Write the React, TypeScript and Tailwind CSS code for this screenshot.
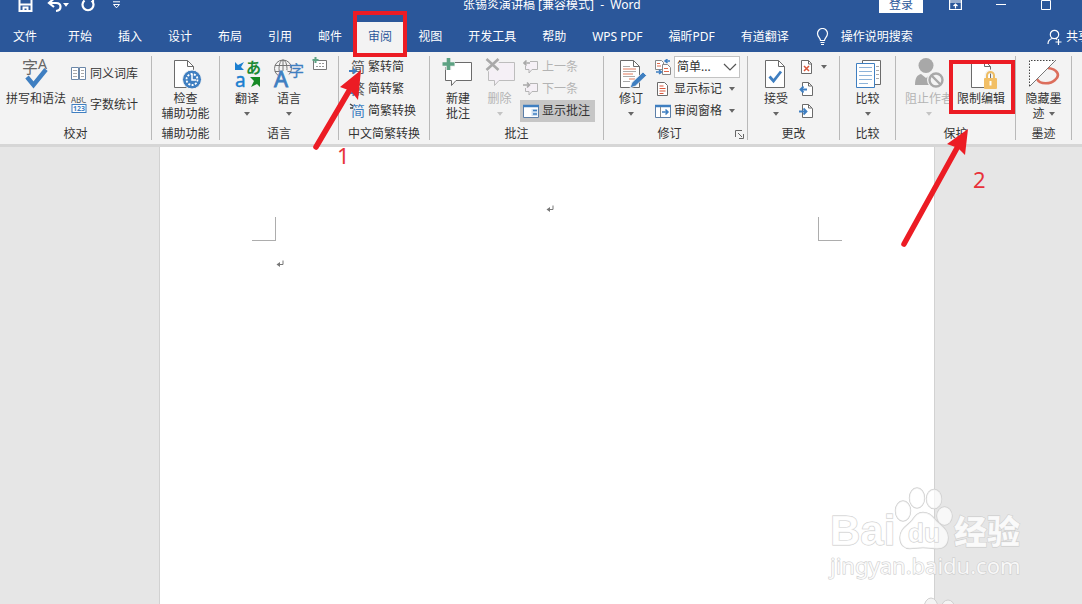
import type { ReactNode } from "react";

const BLUE = "#3f7fc1";
const GREY = "#6b6b6b";

function Svg({ w, h, children, vb }: { w: number; h: number; children: ReactNode; vb?: string }) {
  return (
    <svg width={w} height={h} viewBox={vb ?? `0 0 ${w} ${h}`} fill="none" className="shrink-0" aria-hidden="true">
      {children}
    </svg>
  );
}

function Caret({ dim = false, light = false }: { dim?: boolean; light?: boolean }) {
  return (
    <Svg w={6} h={4}>
      <path d="M0 0h6L3 3.800z" fill={light ? "#fff" : dim ? "#c4c4c4" : "#666"} />
    </Svg>
  );
}

/* ---------- large icons, 32px high ---------- */

const SpellIcon = () => (
  <Svg w={32} h={32}>
    <text x="2" y="15" fontSize="16" fill="#666" fontFamily="Noto Sans CJK SC">字</text>
    <text x="18" y="11" fontSize="14" fill="#666" fontFamily="Noto Sans">A</text>
    <path d="M7 19l6.500 8L26 11.500" stroke={BLUE} strokeWidth="4.400" />
  </Svg>
);

const Sheet = ({ children }: { children?: ReactNode }) => (
  <>
    <path d="M5.500 2.500h13l6 6v21h-19z" fill="#fff" stroke={GREY} />
    <path d="M18.500 2.500v6h6" stroke={GREY} />
    {children}
  </>
);

const AccessIcon = () => (
  <Svg w={32} h={32}>
    <g transform="translate(-1 0)">
      <Sheet />
    </g>
    <circle cx="22" cy="21.500" r="9.500" fill={BLUE} stroke="#f3f3f3" />
    <circle cx="22" cy="21.500" r="5.500" stroke="#fff" strokeWidth="1.800" strokeDasharray="2 1.400" />
    <path d="M22 16v6h4" stroke="#fff" strokeWidth="1.500" />
  </Svg>
);

const TranslateIcon = () => (
  <Svg w={32} h={32}>
    <path d="M4 4l3 3 6-3-3 5 3 3H4z" fill="#1b7fd0" />
    <text x="4" y="29" fontSize="19" fill="#1b7fd0" stroke="#1b7fd0" strokeWidth=".4" fontFamily="Noto Sans">a</text>
    <text x="15" y="15" fontSize="15" fontWeight="700" fill="#1c8a34" fontFamily="Noto Sans CJK JP">あ</text>
    <path d="M19 19h10v10l-3-3-6 3 3-6z" fill="#178a26" />
  </Svg>
);

const LanguageIcon = () => (
  <Svg w={32} h={32}>
    <g stroke="#777">
      <circle cx="10" cy="10.500" r="8.500" />
      <ellipse cx="10" cy="10.500" rx="4" ry="8.500" />
      <path d="M10 2v17M2 7.500h16M2 13.500h16" />
    </g>
    <path d="M1 30h6l10-10-3-8-8 2z" fill="#f3f3f3" />
    <text x="1" y="29" fontSize="22" fill={BLUE} stroke={BLUE} strokeWidth=".8" fontFamily="Noto Sans">A</text>
    <text x="16" y="18" fontSize="15" fill={BLUE} stroke={BLUE} strokeWidth=".3" fontFamily="Noto Sans CJK SC">字</text>
  </Svg>
);

const NewCommentIcon = () => (
  <Svg w={32} h={32}>
    <path d="M3.500 4.500h26v18H14l-4.500 5v-5h-6z" fill="#fff" stroke={GREY} strokeLinejoin="round" />
    <path d="M6.500 0v12M0 6h13" stroke="#f3f3f3" strokeWidth="6" />
    <path d="M6.500 0v12M.5 6h12" stroke="#5da283" strokeWidth="3.600" />
  </Svg>
);

const DeleteIcon = () => (
  <Svg w={32} h={32}>
    <path d="M4.500 4.500h26v18H15l-4.500 5v-5h-6z" fill="#f5f0f6" stroke="#bdbdbd" strokeLinejoin="round" />
    <path d="M2 1l13 11M15 1L2 12" stroke="#f3f3f3" strokeWidth="5" />
    <path d="M2.500 1l12 11M14.500 1l-12 11" stroke="#a9a9a9" strokeWidth="2.600" />
  </Svg>
);

const TrackIcon = () => (
  <Svg w={32} h={32}>
    <Sheet>
      <path d="M8 11h13M8 16h10M14 21h6" stroke="#e27a5c" />
      <path d="M8 8.500h7M8 13.500h13M8 18.500h12M8 23.500h7" stroke="#aaa" />
    </Sheet>
    <path d="M15 30l2-5.500L28 14l3.500 3.500L20.500 28z" fill={BLUE} stroke="#f3f3f3" strokeWidth=".8" />
  </Svg>
);

const AcceptIcon = () => (
  <Svg w={32} h={32}>
    <Sheet />
    <path d="M9.500 18.500l4 4.500L21 13.500" stroke={BLUE} strokeWidth="2.800" />
  </Svg>
);

const CompareIcon = () => (
  <Svg w={32} h={32}>
    <path d="M10.500 2.500h18v24h-18z" fill="#fff" stroke={GREY} />
    <path d="M4.500 5.500h18v24h-18z" fill="#fff" stroke={BLUE} />
    <path d="M7 9.500h13M7 13.500h13M7 17.500h13M7 21.500h13M7 25.500h9" stroke="#8db3d9" />
    <path d="M24 8.500h3M24 12.500h3M24 16.500h3M24 20.500h3" stroke="#aaa" />
  </Svg>
);

const BlockIcon = () => (
  <Svg w={32} h={32}>
    <circle cx="13" cy="7.500" r="7.500" fill="#a8a8a8" />
    <path d="M2 27c0-7 2-10 6-11l5 4 5-4c3 1 5 4 5 11z" fill="#a8a8a8" />
    <circle cx="23" cy="22" r="9" fill="#f3f3f3" />
    <circle cx="23" cy="22" r="6.500" stroke="#a8a8a8" strokeWidth="2.400" />
    <path d="M18.500 17.500l9 9" stroke="#a8a8a8" strokeWidth="2.400" />
  </Svg>
);

const RestrictIcon = () => (
  <Svg w={32} h={32}>
    <g transform="translate(1 0)">
      <Sheet />
    </g>
    <path d="M21.500 21v-3.500a4 4 0 018 0V21" stroke="#f3f3f3" strokeWidth="4" />
    <path d="M22 21v-3.500a3.500 3.500 0 017 0V21" stroke="#eebd63" strokeWidth="2" />
    <rect x="19" y="20" width="13" height="11" rx="1" fill="#f2bf66" />
    <path d="M25.500 23v4.500" stroke="#fff" strokeWidth="2" />
  </Svg>
);

const HideInkIcon = () => (
  <Svg w={32} h={32}>
    <path d="M9 21c3 6 14 5 18 1 6-5 2-11-7-12" stroke="#dc6e5c" strokeWidth="2.600" />
    <path d="M1.500 2.500h26l-26 26z" fill="#fff" />
    <path d="M1.500 28V2.500H28" stroke="#444" strokeDasharray="1.500 1.500" />
    <path d="M28 2L1.500 28.500" stroke="#777" />
  </Svg>
);

/* ---------- small icons, 16px ---------- */

const BookIcon = () => (
  <Svg w={16} h={16}>
    <path d="M.5 1.500h7v12h-7zM8.500 1.500h6v12h-6z" fill="#fff" stroke="#6b87a8" />
    <path d="M2 4.500h4M2 7.500h4M2 10.500h4M10 4.500h3M10 7.500h3M10 10.500h3" stroke="#aaa" />
  </Svg>
);

const CountIcon = () => (
  <Svg w={16} h={16}>
    <text x="0" y="6" fontSize="8" fill="#555" fontFamily="Noto Sans">ABC</text>
    <rect x="1" y="7.500" width="14" height="8" fill="#fff" stroke={BLUE} />
    <text x="2" y="14" fontSize="7" fontWeight="700" fill={BLUE} fontFamily="Noto Sans">123</text>
  </Svg>
);

const ImeIcon = () => (
  <Svg w={16} h={16}>
    <path d="M1.500 4.500h13v9h-13z" fill="#fff" stroke="#777" />
    <path d="M7 7.500h6M4 10.500h8" stroke="#999" strokeDasharray="2 1" />
    <path d="M3.500 1v6M.5 4h6" stroke="#5da283" strokeWidth="2" />
  </Svg>
);

function HanIcon({ char, color, ghost }: { char: string; color: string; ghost?: boolean }) {
  return (
    <Svg w={16} h={16}>
      <text x="2" y="13" fontSize="14" fill={color} fontFamily="Noto Sans CJK SC">{char}</text>
      {ghost ? (
        <path d="M1 1l3 2M1 5h3" stroke="#444" strokeWidth="1.500" />
      ) : (
        <path d="M0 12h6M4 9.500l3 2.500-3 2.500" stroke={BLUE} strokeWidth="1.800" />
      )}
    </Svg>
  );
}

const PrevIcon = ({ next = false }: { next?: boolean }) => (
  <Svg w={16} h={16}>
    <path d="M7 2.500h7.500v8H9l-3 3.500v-3.500H2.500V7" fill="#f5f0f6" stroke="#b5b5b5" />
    {next ? (
      <path d="M0 4h6M4 1.500L6.500 4 4 6.500" stroke="#a9a9a9" strokeWidth="1.600" />
    ) : (
      <path d="M7 4H1M3.500 1.500L1 4l2.500 2.500" stroke="#a9a9a9" strokeWidth="1.600" />
    )}
  </Svg>
);

const ShowCommentsIcon = () => (
  <Svg w={16} h={16}>
    <path d="M.5 2.500h15v12H.5z" fill="#fff" stroke="#5c7fa8" />
    <path d="M0 3h16" stroke={BLUE} strokeWidth="2.500" />
    <path d="M8.500 6h6v7h-6z" fill="#cfe0f1" />
    <path d="M10 7.500h4M10 11h4" stroke={BLUE} strokeWidth="1.500" />
  </Svg>
);

const DisplayIcon = () => (
  <Svg w={16} h={16}>
    <path d="M.5 1.500h6l2 2v7h-8z" fill="#fff" stroke="#888" />
    <path d="M7.500 5.500h5l3 3v7h-8z" fill="#fff" stroke="#888" />
    <path d="M2 4.500h3M2 7h4M9 9.500h4M9 12.500h5" stroke="#e0694a" />
    <path d="M15 2h-4M12.500 0L10 2l2.500 2M1 13h5M4 11l2.500 2L4 15" stroke={BLUE} strokeWidth="1.500" />
  </Svg>
);

const MarkupIcon = () => (
  <Svg w={16} h={16}>
    <path d="M2.500 1.500h7l3 3v10h-10z" fill="#fff" stroke={GREY} />
    <path d="M4.500 5h4M4.500 7.500h6M4.500 10h6M4.500 12.500h4" stroke="#d9573a" />
  </Svg>
);

const PaneIcon = () => (
  <Svg w={16} h={16}>
    <path d="M.5 2.500h15v12H.5z" fill="#fff" stroke="#5c7fa8" />
    <path d="M0 3h16" stroke={BLUE} strokeWidth="2.500" />
    <path d="M5.500 4v10" stroke="#888" />
    <path d="M7 9h6M10.500 6.500L13 9l-2.500 2.500" stroke={BLUE} strokeWidth="1.500" />
  </Svg>
);

function ChangeIcon({ kind }: { kind: "reject" | "prev" | "next" }) {
  return (
    <Svg w={16} h={16}>
      <path d={kind === "reject" ? "M2.500 1.500h7l3 3v10h-10z" : "M3.500 1.500h6l4 4v9h-10z"} fill="#fff" stroke={GREY} />
      <path d="M9.500 1.500v3.500h3.500" stroke={GREY} />
      {kind === "reject" && <path d="M5 7l5 5M10 7l-5 5" stroke="#d9573a" strokeWidth="1.500" />}
      {kind === "prev" && <path d="M8 8.500H1.500M4.500 5.500l-3 3 3 3" stroke={BLUE} strokeWidth="1.800" />}
      {kind === "next" && <path d="M0 8.500h7M4.500 5.500l3 3-3 3" stroke={BLUE} strokeWidth="1.800" />}
    </Svg>
  );
}

/* ---------- ribbon building blocks ---------- */

function Group({ label, width, children, launcher = false }: { label: string; width: string; children: ReactNode; launcher?: boolean }) {
  return (
    <section aria-label={label} className={`flex shrink-0 ${width}`}>
      <div className="flex min-w-0 flex-1 flex-col">
        <div className="flex h-[68px]">{children}</div>
        <div className="flex items-center leading-5">
          <span className="flex-1 text-center">{label}</span>
          {launcher && (
            <button aria-label="修订选项" className="mr-[3px]">
              <Svg w={9} h={9}>
                <path d="M.5 7V.5H7M3 3l4 4M8.500 4v4.500H4" stroke="#666" />
              </Svg>
            </button>
          )}
        </div>
      </div>
      <div className="h-[84px] w-px bg-[#b9b9b9]" />
    </section>
  );
}

function Big({ icon, lines, width, caret = false, dim = false, inlineCaret = false }: { icon: ReactNode; lines: string[]; width: string; caret?: boolean; dim?: boolean; inlineCaret?: boolean }) {
  return (
    <button className={`flex shrink-0 flex-col items-center self-start pt-0.5 leading-[15px] whitespace-nowrap ${width} ${dim ? "text-[#b3b3b3]" : ""}`}>
      <span className="h-[33px]">{icon}</span>
      {lines.map((line, i) => (
        <span key={line} className="flex items-center gap-1">
          {line}
          {inlineCaret && i === lines.length - 1 && <Caret />}
        </span>
      ))}
      {caret && (
        <span className="flex h-[15px] items-center">
          <Caret dim={dim} />
        </span>
      )}
    </button>
  );
}

function Small({ icon, text, dim = false, active = false, caret = false, tall = false }: { icon: ReactNode; text: string; dim?: boolean; active?: boolean; caret?: boolean; tall?: boolean }) {
  return (
    <button
      className={`flex shrink-0 items-center gap-[3px] whitespace-nowrap ${tall ? "h-[31px]" : "h-[22px]"} ${active ? "bg-[#c6c6c6]" : ""} ${dim ? "text-[#b3b3b3]" : ""}`}
    >
      {icon}
      <span>{text}</span>
      {caret && (
        <span className="pl-1">
          <Caret />
        </span>
      )}
    </button>
  );
}

function Tab({ children, active = false }: { children: ReactNode; active?: boolean }) {
  return (
    <button className={`h-full shrink-0 px-[13px] whitespace-nowrap ${active ? "bg-[#f3f3f3] text-[#2b579a]" : ""}`}>{children}</button>
  );
}

const ReturnMark = () => (
  <Svg w={8} h={8}>
    <path d="M7 .5v4H1.500" stroke="#777" />
    <path d="M4 2v5L.5 4.500z" fill="#777" />
  </Svg>
);

function TitleBar() {
  return (
    <header className="h-[22px]">
      <div className="flex h-[10px] items-center">
        <div className="flex w-[463px] shrink-0 items-center pl-[18px]">
          <button aria-label="保存">
            <Svg w={15} h={16}>
              <path d="M1.500 1h12v13h-12z" stroke="#fff" strokeWidth="2" />
              <path d="M2 7.500h11M5.500 14v-3.500h4V14" stroke="#fff" strokeWidth="2" />
            </Svg>
          </button>
          <button aria-label="撤消" className="ml-[14px]">
            <Svg w={16} h={16}>
              <path d="M6.500 2L2 6l5 4M2.500 6H9c6 0 6 7.500 0 8" stroke="#fff" strokeWidth="2.200" />
            </Svg>
          </button>
          <Caret light />
          <button aria-label="重复" className="ml-[11px]">
            <Svg w={16} h={16}>
              <path d="M4.500 3.500a5.500 5.500 0 107 0M8 1h5v5" stroke="#fff" strokeWidth="2.200" />
            </Svg>
          </button>
          <button aria-label="自定义快速访问工具栏" className="ml-4">
            <Svg w={9} h={8}>
              <path d="M1 .8h7M1.500 3.500h6l-3 3.300z" stroke="#fff" />
            </Svg>
          </button>
        </div>
        <h1 className="whitespace-pre">张锡炎演讲稿 [兼容模式]  -  Word</h1>
        <div className="ml-auto flex items-center pr-[31px]">
          <button className="h-4 w-11 bg-white leading-4 text-[#2b579a]">登录</button>
          <button aria-label="功能区显示选项" className="ml-[26px]">
            <Svg w={13} h={12}>
              <path d="M.6 1h11.800v9.500H.6zM1 3h11.500" stroke="#fff" strokeWidth="1.200" />
              <path d="M6.500 9.500V5M4.500 7l2-2 2 2" stroke="#fff" strokeWidth="1.200" />
            </Svg>
          </button>
          <button aria-label="最小化" className="ml-[34px]">
            <Svg w={10} h={10}>
              <path d="M0 4.500h10" stroke="#fff" />
            </Svg>
          </button>
          <button aria-label="最大化" className="ml-[35px]">
            <Svg w={10} h={10}>
              <path d="M.5 .5h9v9h-9z" stroke="#fff" />
            </Svg>
          </button>
        </div>
      </div>
    </header>
  );
}

function Tabs() {
  return (
    <nav className="flex h-[30px] items-center">
      <div className="mr-[5px] flex h-full">
        <Tab>文件</Tab>
      </div>
      <Tab>开始</Tab>
      <Tab>插入</Tab>
      <Tab>设计</Tab>
      <Tab>布局</Tab>
      <Tab>引用</Tab>
      <Tab>邮件</Tab>
      <Tab active>审阅</Tab>
      <Tab>视图</Tab>
      <Tab>开发工具</Tab>
      <Tab>帮助</Tab>
      <Tab>WPS PDF</Tab>
      <Tab>福昕PDF</Tab>
      <Tab>有道翻译</Tab>
      <button className="ml-[14px] flex shrink-0 items-center gap-3 whitespace-nowrap">
        <Svg w={13} h={18}>
          <path d="M4.500 12.500c0-2.500-3-3.500-3-7a5 5 0 0110 0c0 3.500-3 4.500-3 7zM4.500 14.500h4M5 16.500h3" stroke="#fff" strokeWidth="1.200" />
        </Svg>
        操作说明搜索
      </button>
      <button className="-mr-2 ml-auto flex shrink-0 items-center gap-1 whitespace-nowrap">
        <Svg w={15} h={16}>
          <circle cx="7.500" cy="5.500" r="4.200" stroke="#fff" strokeWidth="1.200" />
          <path d="M1 15c0-3 2-5 4.500-5.500M9 9.500l1 1M11.500 10v6M8.500 13h6" stroke="#fff" strokeWidth="1.200" />
        </Svg>
        共享
      </button>
    </nav>
  );
}

function Ribbon() {
  return (
    <div className="flex border-b-[3px] border-[#d6d6d6] bg-[#f3f3f3] pt-1 text-[#333]">
      <Group label="校对" width="w-[152px]">
        <div className="flex gap-[5px] pl-1.5">
          <Big icon={<SpellIcon />} lines={["拼写和语法"]} width="w-[60px]" />
          <div className="flex flex-col pt-0.5">
            <Small tall icon={<BookIcon />} text="同义词库" />
            <Small tall icon={<CountIcon />} text="字数统计" />
          </div>
        </div>
      </Group>
      <Group label="辅助功能" width="w-[68px]">
        <Big icon={<AccessIcon />} lines={["检查", "辅助功能"]} width="w-full" />
      </Group>
      <Group label="语言" width="w-[119px]">
        <div className="flex pl-1.5">
          <Big icon={<TranslateIcon />} lines={["翻译"]} width="w-[42px]" caret />
          <Big icon={<LanguageIcon />} lines={["语言"]} width="w-[42px]" caret />
          <button aria-label="更新输入法词典" className="flex h-4 pl-0.5">
            <ImeIcon />
          </button>
        </div>
      </Group>
      <Group label="中文简繁转换" width="w-[91px]">
        <div className="flex flex-col pl-[10px]">
          <Small icon={<HanIcon char="简" color="#555" />} text="繁转简" />
          <Small icon={<HanIcon char="繁" color="#555" />} text="简转繁" />
          <Small icon={<HanIcon char="简" color={BLUE} ghost />} text="简繁转换" />
        </div>
      </Group>
      <Group label="批注" width="w-[174px]">
        <div className="flex pl-[7px]">
          <Big icon={<NewCommentIcon />} lines={["新建", "批注"]} width="w-[42px]" />
          <Big icon={<DeleteIcon />} lines={["删除"]} width="w-[41px]" caret dim />
          <div className="flex w-[75px] flex-col *:pl-[3px]">
            <Small dim icon={<PrevIcon />} text="上一条" />
            <Small dim icon={<PrevIcon next />} text="下一条" />
            <Small active icon={<ShowCommentsIcon />} text="显示批注" />
          </div>
        </div>
      </Group>
      <Group label="修订" width="w-[144px]" launcher>
        <div className="flex pl-1.5">
          <Big icon={<TrackIcon />} lines={["修订"]} width="w-[42px]" caret />
          <div className="flex flex-col pl-[3px]">
            <label className="flex h-[22px] items-center gap-[3px]">
              <DisplayIcon />
              <span className="relative flex h-full w-[66px] items-center border border-[#c3c3c3] bg-white">
                <select aria-label="显示以供审阅" className="h-full w-full appearance-none bg-transparent pl-0.5 outline-none">
                  <option>简单...</option>
                </select>
                <span className="pointer-events-none absolute right-0.5">
                  <Svg w={14} h={8}>
                    <path d="M1 1l6 6 6-6" stroke="#555" strokeWidth="1.200" />
                  </Svg>
                </span>
              </span>
            </label>
            <Small icon={<MarkupIcon />} text="显示标记" caret />
            <Small icon={<PaneIcon />} text="审阅窗格" caret />
          </div>
        </div>
      </Group>
      <Group label="更改" width="w-[92px]">
        <div className="flex pl-[7px]">
          <Big icon={<AcceptIcon />} lines={["接受"]} width="w-[42px]" caret />
          <div className="flex flex-col pl-0.5">
            <button aria-label="拒绝" className="flex h-[22px] items-center gap-1.5">
              <ChangeIcon kind="reject" />
              <Caret />
            </button>
            <button aria-label="上一处" className="flex h-[22px] items-center">
              <ChangeIcon kind="prev" />
            </button>
            <button aria-label="下一处" className="flex h-[22px] items-center">
              <ChangeIcon kind="next" />
            </button>
          </div>
        </div>
      </Group>
      <Group label="比较" width="w-[56px]">
        <Big icon={<CompareIcon />} lines={["比较"]} width="w-full" caret />
      </Group>
      <Group label="保护" width="w-[120px]">
        <div className="flex pl-[7px]">
          <Big icon={<BlockIcon />} lines={["阻止作者"]} width="w-[52px]" caret dim />
          <Big icon={<RestrictIcon />} lines={["限制编辑"]} width="w-[52px]" />
        </div>
      </Group>
      <Group label="墨迹" width="w-[56px]">
        <Big icon={<HideInkIcon />} lines={["隐藏墨", "迹"]} width="w-full" inlineCaret />
      </Group>
    </div>
  );
}

function Page() {
  return (
    <main className="flex flex-1 bg-[#e6e6e6] pr-[147px] pl-[159px]">
      <article className="flex-1 border-x border-[#d2d2d2] bg-white pt-[58px] text-black">
        <div className="flex justify-center pl-1.5">
          <ReturnMark />
        </div>
        <div className="mt-1 flex justify-between px-[92px]">
          <div className="size-6 border-r border-b border-[#adadad]" />
          <div className="size-6 border-b border-l border-[#adadad]" />
        </div>
        <div className="mt-[19px] pl-[116px]">
          <ReturnMark />
        </div>
      </article>
    </main>
  );
}

function Paw() {
  return (
    <Svg w={60} h={66}>
      <g fill="#fff" fillOpacity=".7" stroke="#cfcfcf" strokeWidth="1.400">
        <ellipse cx="9" cy="26" rx="7.500" ry="10" />
        <ellipse cx="23" cy="13" rx="7.500" ry="10" />
        <ellipse cx="40" cy="14" rx="7.500" ry="9.500" />
        <ellipse cx="50.500" cy="31" rx="7.500" ry="9" />
        <path d="M29 27.500c-6 0-8 4-11 8-4 5-12 8-12 17 0 8 5 11 10 11 4 0 8-1 13-1s9 1 14 1c6 0 11-3 11-11 0-9-8-12-13-18-3-4-6-7-12-7z" />
      </g>
    </Svg>
  );
}

function Watermark() {
  return (
    <div className="pointer-events-none absolute top-[485px] left-[830px] text-white/80 [-webkit-text-stroke:1px_#c9c9c9] [paint-order:stroke_fill]">
      <div className="flex h-[66px] items-end">
        <span className="w-[64px] font-['Liberation_Sans'] text-[42px] leading-[40px] font-bold">Bai</span>
        <span className="relative">
          <Paw />
          <span className="absolute inset-x-0 bottom-1 text-center font-['Liberation_Sans'] text-[26px] leading-7 font-bold">du</span>
        </span>
        <span className="font-['Noto_Sans_CJK_SC'] text-[33px] leading-[42px] font-black">经验</span>
      </div>
      <div className="font-['Noto_Sans'] text-[22px] leading-7">jingyan.baidu.com</div>
    </div>
  );
}

function Annotations() {
  return (
    <div className="pointer-events-none absolute inset-0 overflow-hidden font-['Noto_Sans'] text-[22px] leading-6 text-[#e8323a]">
      <div className="absolute top-[11px] left-[353px] h-[46px] w-[54px] border-4 border-[#ec1c24]" />
      <div className="absolute top-[60px] left-[949px] h-[54px] w-[66px] border-4 border-[#ec1c24]" />
      <svg className="absolute top-0 left-0" width="1082" height="300" viewBox="0 0 1082 300" fill="none" aria-hidden="true">
        <path d="M316 147L349 91" stroke="#ec1c24" strokeWidth="5.500" strokeLinecap="round" />
        <path d="M361 70L358 100L351 91L340 87z" fill="#ec1c24" />
        <path d="M904 244L957 148" stroke="#ec1c24" strokeWidth="5.500" strokeLinecap="round" />
        <path d="M968 129L965 155L958 148L947 144z" fill="#ec1c24" />
      </svg>
      <span className="absolute top-[143px] left-[337px]">1</span>
      <span className="absolute top-[167px] left-[973px]">2</span>
    </div>
  );
}

export default function App() {
  return (
    <div className="relative flex min-h-screen flex-col overflow-hidden bg-[#2b579a] font-['Noto_Sans','Noto_Sans_CJK_SC',sans-serif] text-xs text-white">
      <TitleBar />
      <Tabs />
      <Ribbon />
      <Page />
      <Watermark />
      <div className="pointer-events-none absolute top-[597px] left-[922px]">
        <Svg w={36} h={10}>
          <ellipse cx="9" cy="11" rx="7" ry="10" fill="#f4f4f4" stroke="#d0d0d0" />
          <ellipse cx="26" cy="12" rx="7" ry="9" fill="#f4f4f4" stroke="#d0d0d0" />
        </Svg>
      </div>
      <Annotations />
    </div>
  );
}
